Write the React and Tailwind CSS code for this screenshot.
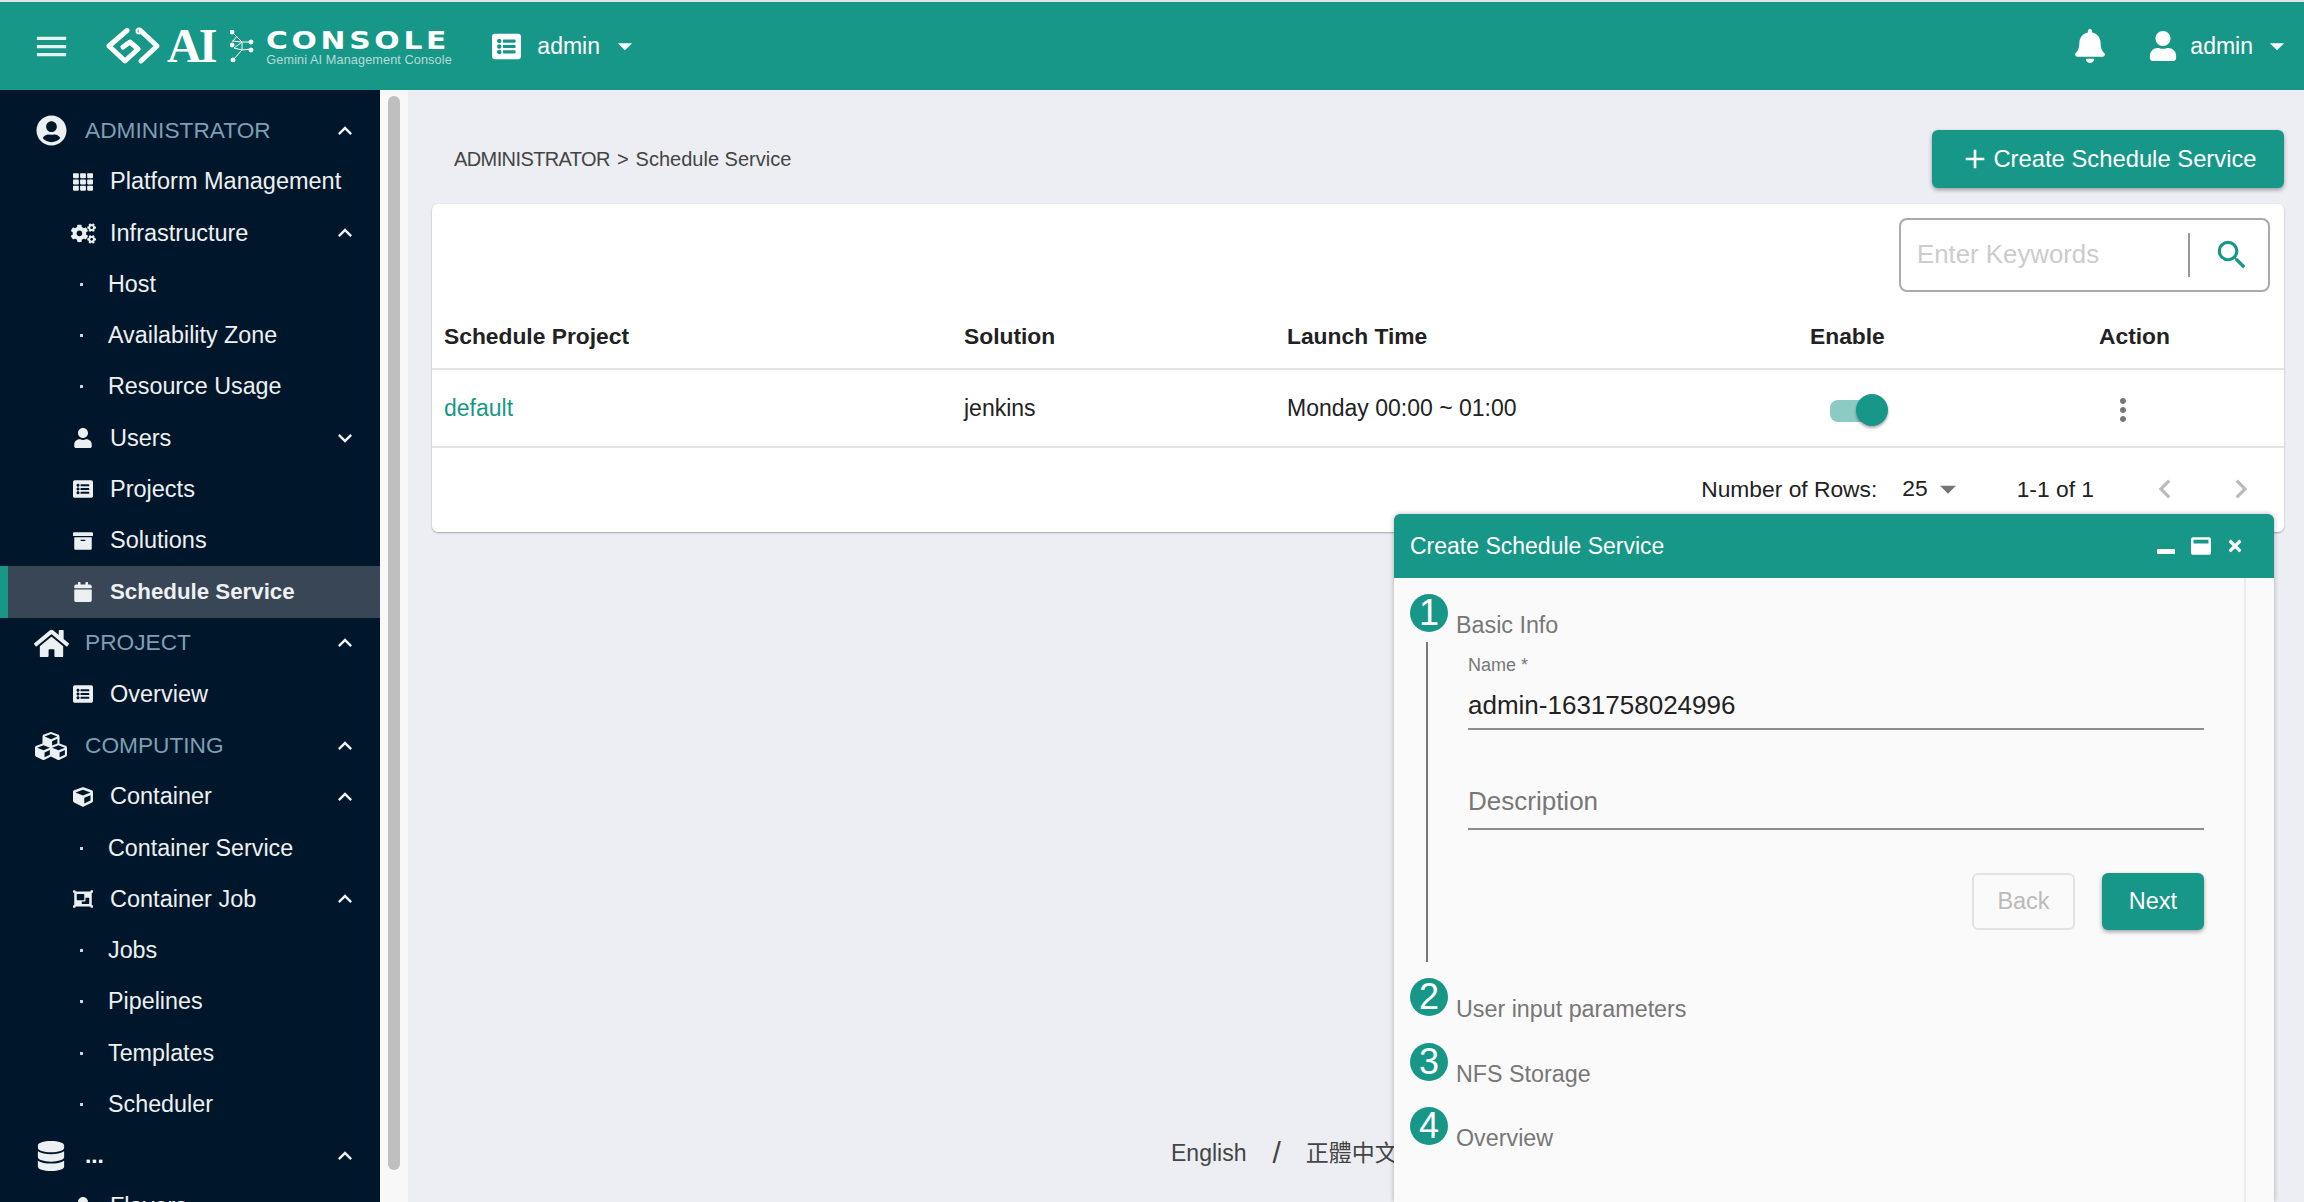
import {
  FaUserCircle, FaTh, FaCogs, FaUser, FaListAlt, FaArchive, FaCalendar, FaHome, FaCubes, FaCube,
  FaObjectGroup, FaDatabase, FaBell, FaTimes, FaWindowMaximize,
} from "react-icons/fa";
import {
  MdMenu, MdSearch, MdExpandLess, MdExpandMore, MdChevronLeft, MdChevronRight, MdArrowDropDown, MdMoreVert, MdAdd,
} from "react-icons/md";

const menu = [
  { type: "section", label: "ADMINISTRATOR", icon: FaUserCircle, size: 31, open: true },
  { type: "item", label: "Platform Management", icon: FaTh },
  { type: "item", label: "Infrastructure", icon: FaCogs, size: 25, open: true },
  { type: "sub", label: "Host" },
  { type: "sub", label: "Availability Zone" },
  { type: "sub", label: "Resource Usage" },
  { type: "item", label: "Users", icon: FaUser, open: false },
  { type: "item", label: "Projects", icon: FaListAlt },
  { type: "item", label: "Solutions", icon: FaArchive },
  { type: "item", label: "Schedule Service", icon: FaCalendar, active: true },
  { type: "section", label: "PROJECT", icon: FaHome, size: 35, open: true },
  { type: "item", label: "Overview", icon: FaListAlt },
  { type: "section", label: "COMPUTING", icon: FaCubes, size: 32, open: true },
  { type: "item", label: "Container", icon: FaCube, open: true },
  { type: "sub", label: "Container Service" },
  { type: "item", label: "Container Job", icon: FaObjectGroup, open: true },
  { type: "sub", label: "Jobs" },
  { type: "sub", label: "Pipelines" },
  { type: "sub", label: "Templates" },
  { type: "sub", label: "Scheduler" },
  { type: "section", label: "...", icon: FaDatabase, size: 30, open: true, light: true },
  { type: "item", label: "Flavors", icon: FaUser },
];

const MenuRow = ({ row }) => {
  const Icon = row.icon;
  const Chevron = row.open ? MdExpandLess : MdExpandMore;
  return (
    <div className={`flex h-[51.25px] shrink-0 items-center ${row.active ? "border-l-8 border-[#179788] bg-[#384655] font-bold" : ""}`}>
      {row.type === "section" && (
        <>
          <span className="flex w-[85px] shrink-0 justify-center pl-[17px] text-[#edf0f2]">
            <Icon size={row.size} />
          </span>
          <span className={`pb-[2px] text-[22.7px] ${row.light ? "font-bold text-white" : "text-[#7c9fb2]"}`}>{row.label}</span>
        </>
      )}
      {row.type === "item" && (
        <>
          <span className={`flex shrink-0 justify-center text-[#edf0f2] ${row.active ? "w-[102px] pl-[48px]" : "w-[110px] pl-[56px]"}`}>
            <Icon size={row.size || 20} />
          </span>
          <span className={`text-[#eef0f2] ${row.active ? "text-[22.3px]" : "text-[23.5px]"}`}>{row.label}</span>
        </>
      )}
      {row.type === "sub" && (
        <>
          <span className="ml-[80px] mr-[25px] h-[3px] w-[3px] shrink-0 bg-[#cfd4d8]" />
          <span className="text-[23.3px] text-[#eef0f2]">{row.label}</span>
        </>
      )}
      {row.open !== undefined && (
        <span className="ml-auto mr-[21px] text-[#eef0f2]">
          <Chevron size={28} />
        </span>
      )}
    </div>
  );
};

const Logo = () => (
  <div className="flex items-center text-white">
    <svg width="56" height="38" viewBox="0 0 56 38" fill="none" stroke="white" strokeWidth="5" strokeLinecap="round" strokeLinejoin="round">
      <path d="M22 3.5 L4 19 L20 34 L33 22 L25 15 L18 20" />
      <path d="M36 4 L52 19 L36 34" />
      <circle cx="34" cy="4" r="1" />
    </svg>
    <span className="ml-[6px] font-['Liberation_Serif',serif] text-[48px] font-bold leading-none tracking-[-3px]">AI</span>
    <svg className="ml-[16px]" width="24" height="32" viewBox="0 0 24 32" fill="white" stroke="white" strokeWidth="1">
      <path d="M2 2 L12 12 L21 12 M2 11 L12 12 L4 18 L12 20 L21 19 M12 12 L12 20 L3 30 M7 6 L3 11" fill="none" />
      <circle cx="2" cy="2" r="2" />
      <circle cx="21" cy="12" r="2" />
      <circle cx="2" cy="15" r="2" />
      <circle cx="21" cy="20" r="2" />
      <circle cx="3" cy="30" r="2" />
    </svg>
    <div className="ml-[12px] flex w-[188px] flex-col pt-[4px]">
      <span className="origin-left scale-x-[1.24] font-['DejaVu_Sans',sans-serif] text-[24px] font-bold leading-[22px] tracking-[3px]">CONSOLE</span>
      <span className="mt-[1px] text-[12.7px] leading-[14px] tracking-[0.1px] text-[#b5dcd6]">Gemini AI Management Console</span>
    </div>
  </div>
);

const Step = ({ n, label, className }) => (
  <div className={`flex h-[38px] items-start ${className || ""}`}>
    <span className="flex h-[38px] w-[38px] shrink-0 items-center justify-center rounded-full bg-[#179788] text-[36px] leading-none text-white">{n}</span>
    <span className="ml-[8px] mt-[17px] text-[23.3px] leading-[28px] text-[#777]">{label}</span>
  </div>
);

const App = () => {
  return (
    <div className="relative flex h-[1202px] w-[2304px] flex-col overflow-hidden bg-[#eceef3] font-['Liberation_Sans','Noto_Sans_CJK_TC',sans-serif]">
      <header className="flex h-[90px] shrink-0 items-center border-t-2 border-[#dfe3e2] bg-[#179788] text-white">
        <MdMenu size={39} className="ml-[32px] mr-[34px] text-[#e6f3f1]" />
        <Logo />
        <FaListAlt size={29} className="ml-[38px]" />
        <span className="ml-[16px] text-[23px]">admin</span>
        <MdArrowDropDown size={34} className="ml-[8px]" />
        <FaBell size={34} className="ml-auto" />
        <FaUser size={30} className="ml-[41px]" />
        <span className="ml-[12px] text-[23px]">admin</span>
        <MdArrowDropDown size={34} className="ml-[7px] mr-[10px]" />
      </header>

      <div className="flex min-h-0 flex-1">
        <aside className="flex w-[380px] shrink-0 flex-col overflow-hidden bg-[#00172b] pt-[15px]">
          {menu.map((row) => (
            <MenuRow key={row.label} row={row} />
          ))}
        </aside>
        <div className="w-[28px] shrink-0 bg-[#f8f8f8] px-[8px] pt-[6px]">
          <div className="h-[1074px] rounded-[8px] bg-[#bfbfbf]" />
        </div>

        <main className="flex min-w-0 flex-1 flex-col pl-[24px] pr-[20px]">
          <div className="flex h-[114px] shrink-0 items-center justify-between pt-[24px]">
            <span className="ml-[22px] text-[20px] text-[#444]">
              <span className="tracking-[-0.6px]">ADMINISTRATOR</span>
              <span className="mx-[7px]">&gt;</span>
              Schedule Service
            </span>
            <button className="flex h-[58px] w-[352px] items-center justify-center rounded-[6px] bg-[#179788] text-[23.8px] text-white shadow-[0_2px_4px_rgba(0,0,0,0.35)]">
              <MdAdd size={32} className="mr-[2px]" />
              Create Schedule Service
            </button>
          </div>

          <section className="h-[328px] shrink-0 rounded-[6px] bg-white pt-[14px] shadow-[0_1px_2px_rgba(0,0,0,0.3)]">
            <div className="flex justify-end pr-[14px]">
              <div className="flex h-[74px] w-[371px] items-center rounded-[8px] border-2 border-[#aaa]">
                <span className="ml-[16px] flex-1 pb-[2px] text-[25.8px] text-[#ccc]">Enter Keywords</span>
                <span className="h-[44px] w-[2px] bg-[#999]" />
                <MdSearch size={38} className="ml-[23px] mr-[17px] text-[#179788]" />
              </div>
            </div>
            <div className="mt-[12px] grid h-[66px] grid-cols-[520px_323px_523px_289px_1fr] items-center border-b-2 border-[#e3e3e3] pl-[12px] text-[22.8px] font-bold text-[#222]">
              <span>Schedule Project</span>
              <span>Solution</span>
              <span>Launch Time</span>
              <span>Enable</span>
              <span>Action</span>
            </div>
            <div className="grid h-[78px] grid-cols-[520px_323px_523px_289px_1fr] items-center border-b-2 border-[#e3e3e3] pl-[12px] text-[23px] text-[#222]">
              <span className="text-[#179788]">default</span>
              <span>jenkins</span>
              <span>Monday 00:00 ~ 01:00</span>
              <div className="relative ml-[20px] mt-[4px] h-[32px] w-[58px]">
                <span className="absolute left-0 top-[6px] h-[22px] w-[45px] rounded-[8px] bg-[#8bcbc3]" />
                <span className="absolute left-[26px] top-0 h-[32px] w-[32px] rounded-full bg-[#179788] shadow-[0_2px_3px_rgba(0,0,0,0.35)]" />
              </div>
              <MdMoreVert size={36} className="ml-[6px] mt-[4px] text-[#757575]" />
            </div>
            <div className="flex h-[80px] items-center justify-end pt-[2px] text-[22.8px] text-[#222]">
              <span>Number of Rows:</span>
              <span className="ml-[25px] pb-[2px]">25</span>
              <MdArrowDropDown size={38} className="ml-[1px] text-[#757575]" />
              <span className="ml-[50px]">1-1 of 1</span>
              <MdChevronLeft size={38} className="ml-[52px] text-[#bbb]" />
              <MdChevronRight size={38} className="ml-[38px] mr-[24px] text-[#bbb]" />
            </div>
          </section>

          <footer className="mb-[32px] mt-auto flex items-center pl-[739px] text-[23px] text-[#444]">
            <span>English</span>
            <span className="ml-[26px] text-[30px] leading-none">/</span>
            <span className="ml-[25px] whitespace-nowrap">正體中文</span>
          </footer>
        </main>
      </div>

      <div className="absolute bottom-0 right-[30px] top-[514px] flex w-[880px] flex-col rounded-t-[6px] bg-[#fafafa] shadow-[0_0_5px_rgba(0,0,0,0.3)]">
        <div className="flex h-[64px] shrink-0 items-center rounded-t-[6px] bg-[#179788] px-[16px] text-[23px] text-white">
          <span>Create Schedule Service</span>
          <span className="ml-auto mr-[16px] mt-[10px] h-[5px] w-[18px] rounded-[1px] bg-white" />
          <FaWindowMaximize size={20} className="mr-[15px]" />
          <FaTimes size={18} className="mr-[14px]" />
        </div>
        <div className="w-[852px] flex-1 border-r-2 border-[#ececec] pl-[16px] pr-[40px] pt-[16px]">
          <Step n="1" label="Basic Info" />
          <div className="ml-[16px] mt-[10px] h-[320px] border-l-2 border-[#777] pl-[40px]">
            <div className="pt-[11px] text-[18px] leading-[24px] text-[#777]">Name *</div>
            <div className="mt-[12px] border-b-2 border-[#8c8c8c] pb-[7px] text-[26px] leading-[32px] text-[#222]">admin-1631758024996</div>
            <div className="mt-[55px] border-b-2 border-[#8c8c8c] pb-[11px] text-[26px] leading-[32px] text-[#777]">Description</div>
            <div className="mt-[43px] flex justify-end gap-[27px]">
              <button className="h-[57px] w-[103px] rounded-[6px] border-2 border-[#e2e2e2] text-[23.5px] text-[#bbb]">Back</button>
              <button className="h-[57px] w-[102px] rounded-[6px] bg-[#179788] text-[23.5px] text-white shadow-[0_2px_4px_rgba(0,0,0,0.35)]">Next</button>
            </div>
          </div>
          <Step n="2" label="User input parameters" className="mt-[16px]" />
          <Step n="3" label="NFS Storage" className="mt-[27px]" />
          <Step n="4" label="Overview" className="mt-[26px]" />
        </div>
      </div>
    </div>
  );
};

export default App;
